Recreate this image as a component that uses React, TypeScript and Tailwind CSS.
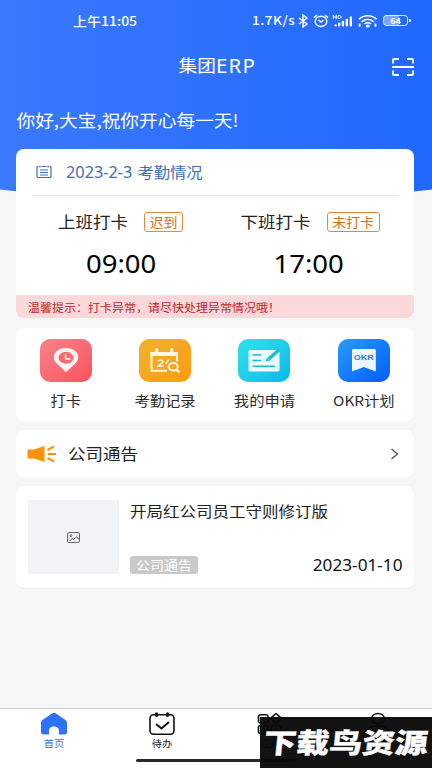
import type { ReactNode } from "react";

/* Wide text: the font size sets the advance width, the vertical scale flattens the glyphs. */
function T({ className = "", children }: { className?: string; children: ReactNode }) {
  return (
    <span className={`inline-block origin-center scale-y-[0.9] whitespace-nowrap leading-none ${className}`}>
      {children}
    </span>
  );
}

/* Latin letters and digits, nearly unflattened. */
function L({ className = "", children }: { className?: string; children: ReactNode }) {
  return (
    <span className={`inline-block origin-center scale-y-[0.95] whitespace-nowrap font-['Noto_Sans'] leading-none ${className}`}>
      {children}
    </span>
  );
}

function StatusBar() {
  return (
    <div className="flex h-10 items-center pl-[73px] pt-px text-white">
      <T className="mt-px w-[65px] text-[14px] font-medium">上午11:05</T>
      <T className="ml-[114px] mt-px w-[43px] text-[13.500px] font-medium tracking-[0.5px]">1.7K/s</T>
      <svg className="ml-[3px] h-[14px] w-[11px]" viewBox="0 0 11 14" fill="none" stroke="currentColor" strokeWidth="1.400">
        <path d="M1 4l8 6-4 3V1l4 3-8 6" />
      </svg>
      <svg className="ml-[4px] h-[14px] w-[16px]" viewBox="0 0 16 14" fill="none" stroke="currentColor" strokeWidth="1.400">
        <ellipse cx="8" cy="7.400" rx="5.800" ry="5.100" />
        <path d="M5.500 6l2.500 2 2.500-2M1 3.600L4 1M15 3.600L12 1" />
      </svg>
      <svg className="ml-[3px] h-[14px] w-[21px]" viewBox="0 0 21 14" fill="currentColor">
        <path d="M1.400 1v4M4.200 1v4M1.400 3h2.800M6 1.500v3h1.300c2.400 0 2.400-3 0-3z" fill="none" stroke="currentColor" strokeWidth="1" />
        <rect x="2.500" y="10.200" width="2.300" height="2.200" rx=".8" />
        <rect x="6" y="8.600" width="2.300" height="3.800" rx=".8" />
        <rect x="9.800" y="6.800" width="2.300" height="5.600" rx=".8" />
        <rect x="13.700" y="4.700" width="2.300" height="7.700" rx=".8" />
        <rect x="17.700" y="2.400" width="2.300" height="10" rx=".8" />
      </svg>
      <svg className="ml-[5px] h-[14px] w-[20px]" viewBox="0 0 20 14" fill="none" stroke="currentColor" strokeWidth="1.600">
        <path d="M1 5.300c5-4.700 12.500-4.700 17.500 0M3.600 7.900c3.800-3.400 8.600-3.400 12.400 0M6.500 10c2-1.700 4.500-1.700 6.500 0" />
        <ellipse cx="9.800" cy="12" rx="1.200" ry=".7" fill="currentColor" />
        <path d="M1.700 9.500v3.300M17.500 9.500v3.300" strokeWidth="1.800" />
      </svg>
      <div className="ml-[5px] flex h-[11px] w-[25px] items-center justify-center rounded-[4px] border border-white/80 bg-[linear-gradient(90deg,#ffffff66_64%,transparent_64%)]">
        <T className="text-[9px] font-bold">64</T>
      </div>
      <div className="ml-px h-[3px] w-[2px] rounded-r bg-white" />
    </div>
  );
}

function PinIcon() {
  return (
    <svg className="h-[43px] w-[52px]" viewBox="0 0 52 43">
      <path d="M26 33.300L16.500 24.300c-6.500-6.800-.7-15.300 9.500-15.300s16 8.500 9.500 15.300z" fill="#fff2f2" />
      <ellipse cx="26" cy="18.800" rx="7.500" ry="6" fill="#f66a72" />
      <path d="M25.600 15.300v4.700h5" fill="none" stroke="#fff" strokeWidth="1.500" />
    </svg>
  );
}

function RecordIcon() {
  return (
    <svg className="h-[43px] w-[52px]" viewBox="0 0 52 43" fill="none" stroke="#fff7e4">
      <path d="M38 22.500V14H12.500v17.700H28" strokeWidth="2" />
      <path d="M11.500 13h27.500v4H11.500z" fill="#fff7e4" stroke="none" />
      <path d="M17.700 10.500v3.500M32.800 10.500v3.500" strokeWidth="3.200" strokeLinecap="round" />
      <path d="M19.300 22.300c1-2 4.800-1.700 4.500.6-.2 1.500-3.200 2.500-4.700 4.300h5.400M26.300 25l3.700-4.500" strokeWidth="1.500" />
      <ellipse cx="34.200" cy="27.800" rx="4.600" ry="3.700" strokeWidth="2" />
      <path d="M37.500 30.800l2.800 2.300" strokeWidth="2.200" />
    </svg>
  );
}

function ApplyIcon() {
  return (
    <svg className="h-[43px] w-[52px]" viewBox="0 0 52 43">
      <rect x="10.500" y="11" width="31" height="21.500" rx="1.500" fill="#ecfcfe" />
      <path d="M14.500 16h9M14.500 21.500h9M14.500 27.300h22.500" stroke="#20b9cf" strokeWidth="1.400" fill="none" />
      <path d="M41 11L30.500 20" stroke="#20bcd4" strokeWidth="3.600" />
      <path d="M28.700 18.800l3.400 2.600-4.300 1z" fill="#20bcd4" />
    </svg>
  );
}

function OkrIcon() {
  return (
    <div className="flex h-[23px] w-[24px] items-start justify-center rounded-t-[1px] bg-[#eef6ff] pt-[4px] text-[#1f7fe6] [clip-path:polygon(0_0,100%_0,100%_100%,50%_80%,0_100%)]">
      <T className="font-['Liberation_Sans'] text-[9px] font-bold">OKR</T>
    </div>
  );
}

const tiles = [
  { label: "打卡", color: "bg-linear-to-br from-[#f7828a] to-[#fb515d]", icon: <PinIcon /> },
  { label: "考勤记录", color: "bg-linear-to-br from-[#efb22b] to-[#ff9a0c]", icon: <RecordIcon /> },
  { label: "我的申请", color: "bg-linear-to-br from-[#34e1ea] to-[#08b9e8]", icon: <ApplyIcon /> },
  { label: "OKR计划", color: "bg-linear-to-br from-[#2b9bf8] to-[#0b5bfb]", icon: <OkrIcon /> },
];

function Shift({ name, tag, time, className, timeClass }: { name: string; tag: string; time: string; className: string; timeClass: string }) {
  return (
    <div className={`flex flex-col items-start ${className}`}>
      <div className="flex h-5 items-center">
        <T className="text-[17.500px] text-[#222]">{name}</T>
        <div className="ml-[16px] flex h-[20px] items-center rounded-[3px] border border-[#dc8a48] bg-[#fffdf8] px-[4.500px]">
          <T className="text-[14px] text-[#d5701f]">{tag}</T>
        </div>
      </div>
      <L className={`mt-[18px] text-[27.500px] text-black ${timeClass}`}>{time}</L>
    </div>
  );
}

function Navigation() {
  return (
    <nav className="relative grid h-[60px] grid-cols-4 border-t border-[#cfcfcf] bg-white text-[10.300px] text-[#222]">
      <div className="flex flex-col items-center pt-[3px] text-[#3875d0]">
        <svg className="h-[24px] w-[28px]" viewBox="0 0 28 24">
          <path d="M1 10.500Q1 9 2.500 8L12 1.400q2-1.200 4 0L25.500 8Q27 9 27 10.500V20q0 2.500-3 2.500h-5V18.500c0-5.500-10-5.500-10 0V22.500H4q-3 0-3-2.500z" fill="#2e72f8" />
        </svg>
        <T className="mt-[2px]">首页</T>
      </div>
      <div className="flex flex-col items-center pt-[3px]">
        <svg className="h-[24px] w-[28px]" viewBox="0 0 28 24" fill="none" stroke="#111" strokeWidth="1.600">
          <rect x="2" y="2.700" width="24" height="19.500" rx="3.500" />
          <path d="M8.500 1.800v1.700M19.500 1.800v1.700" strokeWidth="3" strokeLinecap="round" />
          <path d="M8 12l5.500 4.500 7.500-6.500" strokeWidth="2" />
        </svg>
        <T className="mt-[2px]">待办</T>
      </div>
      <div className="flex flex-col items-center pt-[3px]">
        <svg className="h-[24px] w-[28px]" viewBox="0 0 28 24" fill="none" stroke="#111" strokeWidth="1.600">
          <rect x="2.500" y="2.800" width="9.500" height="8" rx="2" />
          <path d="M20 1.500l5.500 4.800L20 11l-5.500-4.700z" strokeLinejoin="round" />
          <rect x="2.500" y="13.500" width="9.500" height="8" rx="2" />
          <rect x="15.500" y="13.500" width="9.500" height="8" rx="2" />
        </svg>
        <T className="mt-[2px]">应用</T>
      </div>
      <div className="flex flex-col items-center pt-[3px]">
        <svg className="h-[24px] w-[28px]" viewBox="0 0 28 24" fill="none" stroke="#111" strokeWidth="1.600">
          <ellipse cx="14" cy="6.500" rx="6.300" ry="5" />
          <path d="M4 22v-3c0-7 20-7 20 0v3z" />
        </svg>
        <T className="mt-[2px]">我的</T>
      </div>
      <div className="absolute left-[136px] top-[50px] h-[3px] w-[160px] rounded-full bg-[#2c2829]" />
      <div className="absolute right-0 top-[8px] flex h-[52px] w-[172px] items-center justify-center bg-[#080808]/96 pb-[3px] text-white">
        <span className="whitespace-nowrap text-[32.800px] font-black leading-none [-webkit-text-stroke:0.400px_white] [transform:skewX(-6deg)_scaleY(0.84)]">
          下载鸟资源
        </span>
      </div>
    </nav>
  );
}

export default function App() {
  return (
    <div className="flex h-[768px] w-[432px] flex-col overflow-hidden bg-[#f6f6f6] font-['Noto_Sans_CJK_SC',sans-serif]">
      <header className="h-[201px] shrink-0 bg-linear-to-r from-[#3a79fd] to-[#2068fe] text-white [clip-path:ellipse(150%_100%_at_50%_0)]">
        <StatusBar />
        <div className="flex h-[50px] items-center pl-[178.500px]">
          <T className="text-[18.700px]">集团</T>
          <L className="w-[40px] text-[20.500px] tracking-[1.200px]">ERP</L>
          <svg className="ml-[135.500px] mt-[4px] h-[20px] w-[24px]" viewBox="0 0 24 20" fill="none" stroke="currentColor" strokeWidth="1.800">
            <path d="M2 6.500V3q0-1 1-1h5M16 2h5q1 0 1 1v3.500M2 13.500V17q0 1 1 1h5M16 18h5q1 0 1-1v-3.500M1 10h22" />
          </svg>
        </div>
        <div className="flex h-[60px] items-center pl-[16.500px]">
          <T className="text-[18.700px]">你好,大宝,祝你开心每一天!</T>
        </div>
      </header>

      <main className="relative -mt-[52px] ml-4 flex w-[397.500px] grow flex-col">
        <section className="h-[169px] overflow-hidden rounded-[8px] bg-white">
          <div className="mx-4 flex h-[47px] items-center border-b border-[#e4e4e4] pl-[4px]">
            <svg className="h-[14px] w-[16px]" viewBox="0 0 16 14" fill="none" stroke="#3c6fb8" strokeWidth="1.200">
              <path d="M2.500 1.500H2q-1 0-1 1v9q0 1 1 1h12q1 0 1-1v-9q0-1-1-1h-.5M5.500 1.500h5M4 .5v2M12 .5v2M4 5h8M4 7.500h8M4 10h8" />
            </svg>
            <L className="ml-[14px] text-[16.300px] text-[#3c6fb8]">2023-2-3</L>
            <T className="ml-[5px] text-[16.300px] text-[#3c6fb8]">考勤情况</T>
          </div>
          <div className="flex h-[98.500px] pt-4">
            <Shift className="w-[182px] pl-[42px]" name="上班打卡" tag="迟到" time="09:00" timeClass="ml-[28px]" />
            <Shift className="pl-[42.500px]" name="下班打卡" tag="未打卡" time="17:00" timeClass="ml-[33px]" />
          </div>
          <div className="flex h-[24px] items-center bg-[#fbd9da] pl-[12px]">
            <T className="text-[12px] text-[#c22227]">温馨提示：打卡异常，请尽快处理异常情况哦！</T>
          </div>
        </section>

        <section className="mt-[9.500px] grid h-[93.500px] grid-cols-4 rounded-[8px] bg-white pt-[11px]">
          {tiles.map((tile) => (
            <div key={tile.label} className="flex flex-col items-center">
              <div className={`flex h-[43px] w-[52px] items-center justify-center rounded-[10px] ${tile.color}`}>{tile.icon}</div>
              <T className="mt-[11px] text-[15.300px] text-[#2b2b2b]">{tile.label}</T>
            </div>
          ))}
        </section>

        <section className="mt-[9px] flex h-[47px] items-center rounded-[8px] bg-white pl-[11px] pr-[15px]">
          <svg className="h-[18px] w-[30px]" viewBox="0 0 30 18" fill="#fb920d">
            <path d="M1.500 4.500H7L17.500 1v16L7 13.500H1.500q-1 0-1-1v-7q0-1 1-1z" />
            <path d="M20.500 5l6.500-3.500M21 9h8M20.500 13l6.500 3.500" fill="none" stroke="#fb920d" strokeWidth="2" />
          </svg>
          <T className="ml-[11px] text-[17.500px] text-[#222]">公司通告</T>
          <svg className="ml-auto h-[12px] w-[9px]" viewBox="0 0 9 12" fill="none" stroke="#555" strokeWidth="1.300">
            <path d="M1.500 1l6 5-6 5" />
          </svg>
        </section>

        <section className="mt-[9px] flex h-[102.500px] rounded-[8px] border-b border-[#ececec] bg-white pl-[12px] pr-[11px] pt-[14px]">
          <div className="flex h-[74px] w-[91px] items-center justify-center bg-[#f2f3f5]">
            <svg className="h-[11px] w-[13px]" viewBox="0 0 13 11" fill="none" stroke="#5c5e62" strokeWidth="1">
              <rect x=".6" y=".6" width="11.800" height="9.800" rx="1" />
              <circle cx="4" cy="3.700" r="1" />
              <path d="M2.500 9l2.700-2.400 1.300 1L9.500 5l3 2.700" />
            </svg>
          </div>
          <div className="flex h-[74px] grow flex-col justify-between pl-[11px]">
            <T className="mt-[3px] self-start text-[16.500px] text-[#222]">开局红公司员工守则修订版</T>
            <div className="flex items-center justify-between">
              <div className="flex h-[18px] w-[68px] items-center justify-center rounded-[3px] bg-[#c9c9c9]">
                <T className="text-[14px] text-white">公司通告</T>
              </div>
              <L className="text-[17.200px] text-[#111]">2023-01-10</L>
            </div>
          </div>
        </section>
      </main>

      <Navigation />
    </div>
  );
}
